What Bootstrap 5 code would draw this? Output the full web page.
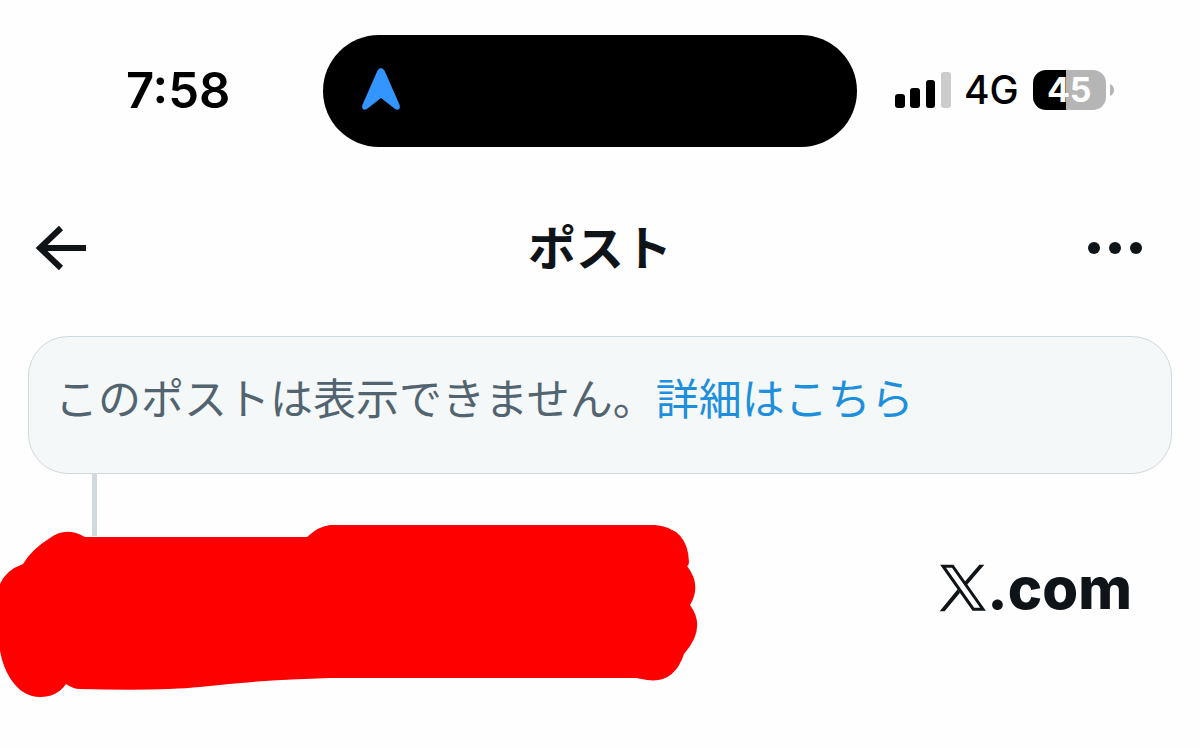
<!DOCTYPE html>
<html lang="ja">
<head>
<meta charset="utf-8">
<meta name="viewport" content="width=device-width, initial-scale=1">
<title>ポスト</title>
<link href="https://cdn.jsdelivr.net/npm/bootstrap@5.3.0/dist/css/bootstrap.min.css" rel="stylesheet">
<style>
  body { font-family: Inter, "Noto Sans CJK JP", sans-serif; color: #0f1419; background: #fefefe; }
  .status-bar { display: grid; grid-template-columns: 323fr 534fr 343fr; padding-top: 35px; color: #000; }
  .clock { font-size: 49px; line-height: 56px; font-weight: 600; padding-left: 126px; }
  .island { height: 112px; border-radius: 56px; background: #000; padding: 0 38px 4px; }
  .signals { padding: 0 0 3px 38px; }
  .network { font-size: 39px; line-height: 48px; font-weight: 500; margin-left: 13px; }
  .battery { width: 73px; height: 40px; border-radius: 13px; margin-left: 14px; color: #fff;
    font-size: 34px; line-height: 40px; font-weight: 700; background: linear-gradient(90deg, #000 45%, #b5b5b5 45%); }
  .title-bar { padding: 54px 34px 39px; }
  .title-bar h1 { font-size: 48px; line-height: 96px; font-weight: 700; }
  .title-bar .btn { width: 80px; --bs-btn-border-width: 0; padding: 0 0 3px; }
  .title-bar .more { padding-right: 23px; }
  .notice { margin: 0 28px; padding: 30px 26px 42px; border: 1px solid #cfd9de; border-radius: 40px;
    background: #f5f8f8; color: #536471; font-size: 43px; line-height: 64px; }
  .notice a { color: #1d8fdc; }
  .thread { width: 5px; height: 62px; margin-left: 92px; background: #cfd9de; }
  .scribble { width: 58.25%; margin-top: -12px; }
  .source { font-size: 58px; line-height: 72px; font-weight: 800; padding: 16px 68px 0 0; }
</style>
</head>
<body>
<header>
  <div class="status-bar align-items-center">
    <div class="clock">7:58</div>
    <div class="island d-flex align-items-center">
      <svg width="40" height="44" viewBox="0 0 40 44" aria-hidden="true"><path d="M16.500 3.500Q20 -1.500 23.500 3.500L38.600 38Q40 44 34.500 42.300L20 31L5.500 42.300Q0 44 1.400 38Z" fill="#3395ff"/></svg>
    </div>
    <div class="signals d-flex align-items-center">
      <svg width="56" height="36" viewBox="0 0 56 36" aria-hidden="true">
        <rect y="22" width="10" height="14" rx="3"/><rect x="15" y="16" width="10" height="20" rx="3"/>
        <rect x="31" y="8" width="9" height="28" rx="3"/><rect x="46" width="10" height="36" rx="3" fill="#ccc"/>
      </svg>
      <span class="network">4G</span>
      <span class="battery text-center">45</span>
      <svg class="ms-1" width="4" height="12" viewBox="0 0 4 12" aria-hidden="true"><path d="M0 0Q4 2 4 6Q4 10 0 12Z" fill="#b5b5b5"/></svg>
    </div>
  </div>
  <nav class="title-bar d-flex align-items-center justify-content-between" aria-label="ポスト">
    <button type="button" class="btn d-flex" aria-label="戻る">
      <svg width="54" height="46" viewBox="0 0 54 46" fill="none" stroke="#0f1419" stroke-width="6" aria-hidden="true"><path d="M52 23H8M27 3L6 23L27 43"/></svg>
    </button>
    <h1 class="m-0">ポスト</h1>
    <button type="button" class="btn more d-flex justify-content-end" aria-label="その他">
      <svg width="56" height="14" viewBox="0 0 56 14" fill="#0f1419" aria-hidden="true"><circle cx="7" cy="7" r="6"/><circle cx="28" cy="7" r="6"/><circle cx="49" cy="7" r="6"/></svg>
    </button>
  </nav>
</header>
<main>
  <div class="notice">このポストは表示できません。<a href="#" class="text-decoration-none">詳細はこちら</a></div>
  <div class="thread"></div>
  <div class="d-flex justify-content-between align-items-start">
    <svg class="scribble" viewBox="0 0 699 173" aria-hidden="true"><path fill="#f00" d="M0 60Q6 46 23 40Q32 25 50 14Q66 2 85 13H307Q319 2 330 1H655Q688 4 689 38Q689 41 687 42Q702 61 690 81Q707 104 684 130Q674 160 647 156L636 154H330Q260 156 200 163Q160 167 80 165Q73 165 66 160Q57 173 40 173Q22 173 10 154Q3 143 0 127Z"/></svg>
    <div class="source d-flex align-items-center">
      <svg width="48" height="48" viewBox="0 0 144 144" role="img" aria-label="X"><path fill="none" stroke="#0f1419" stroke-width="9" d="M12 6.500H41L132 135.500H103Z"/><path fill="#0f1419" d="M121 2H136L81 66L74 57ZM56 76L63 86L17 142H2Z"/></svg><span>.com</span>
    </div>
  </div>
</main>
<script src="https://cdn.jsdelivr.net/npm/bootstrap@5.3.0/dist/js/bootstrap.bundle.min.js"></script>
</body>
</html>
